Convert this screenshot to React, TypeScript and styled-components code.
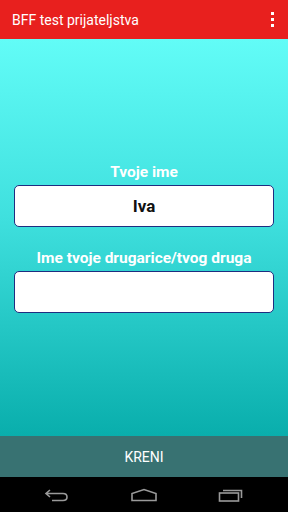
import { useState } from 'react'
import styled, { createGlobalStyle } from 'styled-components'

const GlobalStyle = createGlobalStyle`
  html, body {
    margin: 0;
    padding: 0;
  }
  body {
    font-family: Roboto, 'Liberation Sans', sans-serif;
  }
`

const Root = styled.div`
  display: flex;
  flex-direction: column;
  width: 288px;
  height: 512px;
  overflow: hidden;
`

const AppBar = styled.header`
  display: flex;
  align-items: center;
  justify-content: space-between;
  height: 39px;
  padding: 0 8px 0 12px;
  background: #e8201e;
  color: #fff;
  flex-shrink: 0;
`

const Title = styled.h1`
  margin: 0;
  font-size: 14px;
  font-weight: 400;
`

const MenuButton = styled.button`
  display: flex;
  flex-direction: column;
  align-items: center;
  gap: 3px;
  width: 16px;
  padding: 0;
  border: 0;
  background: none;
`

const MenuDot = styled.span`
  width: 3px;
  height: 3px;
  background: #fff;
`

const Content = styled.main`
  flex: 1;
  display: flex;
  flex-direction: column;
  justify-content: center;
  padding: 0 14px;
  background: linear-gradient(180deg, #62fcf7 0%, #3fe0de 45%, #09aeac 100%);
`

const Field = styled.label`
  display: flex;
  flex-direction: column;
  align-items: center;
  gap: 4px;
  & + & {
    margin-top: 22px;
  }
`

const Label = styled.span`
  color: #fff;
  font-size: 15.5px;
  font-weight: 700;
  line-height: 18px;
`

const Input = styled.input`
  box-sizing: border-box;
  width: 100%;
  height: 42px;
  border: 1px solid #1f2d80;
  border-radius: 5px;
  background: #fff;
  text-align: center;
  font-family: Roboto, 'Liberation Sans', sans-serif;
  font-size: 17px;
  font-weight: 700;
  color: #111;
  outline: none;
`

const GoButton = styled.button`
  height: 41px;
  border: 0;
  background: #387272;
  color: #fff;
  font-family: Roboto, 'Liberation Sans', sans-serif;
  font-size: 14px;
  flex-shrink: 0;
`

const NavBar = styled.nav`
  display: flex;
  align-items: center;
  justify-content: space-around;
  height: 35px;
  padding: 0 14px;
  background: #000;
  flex-shrink: 0;
`

const NavIcon = styled.svg`
  display: block;
  stroke: #9a9a9a;
  stroke-width: 1.6;
  fill: none;
`

export default function App() {
  const [name, setName] = useState('Iva')
  const [friend, setFriend] = useState('')

  return (
    <Root>
      <GlobalStyle />
      <AppBar>
        <Title>BFF test prijateljstva</Title>
        <MenuButton aria-label="Više opcija">
          <MenuDot />
          <MenuDot />
          <MenuDot />
        </MenuButton>
      </AppBar>

      <Content>
        <Field>
          <Label>Tvoje ime</Label>
          <Input value={name} onChange={(e) => setName(e.target.value)} />
        </Field>
        <Field>
          <Label>Ime tvoje drugarice/tvog druga</Label>
          <Input value={friend} onChange={(e) => setFriend(e.target.value)} />
        </Field>
      </Content>

      <GoButton>KRENI</GoButton>

      <NavBar>
        <NavIcon width="26" height="14" viewBox="0 0 26 14">
          <path d="M6 2 L2 5.5 L6 9 M2 5.5 H19 Q23 5.5 23 9 Q23 12.5 19 12.5 H8" />
        </NavIcon>
        <NavIcon width="28" height="14" viewBox="0 0 28 14">
          <path d="M2 12.5 V5.5 L14 1.5 L26 5.5 V12.5 Z" />
        </NavIcon>
        <NavIcon width="26" height="16" viewBox="0 0 26 16">
          <rect x="1.5" y="6" width="19" height="8" />
          <path d="M5 3.5 H23.5 V11" />
        </NavIcon>
      </NavBar>
    </Root>
  )
}
